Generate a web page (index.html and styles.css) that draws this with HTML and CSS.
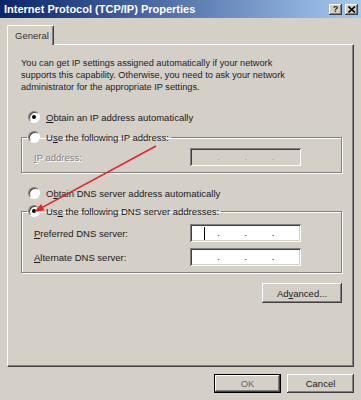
FILE: index.html
```html
<!DOCTYPE html>
<html lang="en">
<head>
    <meta charset="UTF-8">
    <title>Internet Protocol (TCP/IP) Properties</title>
    <link rel="stylesheet" href="styles.css">
</head>
<body>

<div class="window">
    <div class="titlebar">
        <span class="title">Internet Protocol (TCP/IP) Properties</span>
        <div class="caption-btns">
            <span class="cap-btn help">?</span>
            <span class="cap-btn">
                <svg width="8" height="7" viewBox="0 0 8 7"><path d="M0.5 0.5 L7 6.5 M7 0.5 L0.5 6.5" stroke="#000" stroke-width="1.6"/></svg>
            </span>
        </div>
    </div>

    <div class="tabs">
        <div class="tab">General</div>
    </div>

    <div class="panel">
        <p class="intro">You can get IP settings assigned automatically if your network<br>supports this capability. Otherwise, you need to ask your network<br>administrator for the appropriate IP settings.</p>

        <div class="option first"><span class="radio checked"></span><span><u>O</u>btain an IP address automatically</span></div>

        <fieldset class="group ip-group">
            <legend><span class="option"><span class="radio"></span><span>U<u>s</u>e the following IP address:</span></span></legend>
            <div class="field-row disabled">
                <label><u>I</u>P address:</label>
                <div class="ipbox off">
                    <span class="octet"></span><span class="dot">.</span>
                    <span class="octet"></span><span class="dot">.</span>
                    <span class="octet"></span><span class="dot">.</span>
                    <span class="octet"></span>
                </div>
            </div>
        </fieldset>

        <div class="option dns-auto"><span class="radio"></span><span>O<u>b</u>tain DNS server address automatically</span></div>

        <fieldset class="group dns-group">
            <legend><span class="option"><span class="radio checked"></span><span>Us<u>e</u> the following DNS server addresses:</span></span></legend>
            <div class="field-row">
                <label><u>P</u>referred DNS server:</label>
                <div class="ipbox">
                    <span class="octet"><span class="caret"></span></span><span class="dot">.</span>
                    <span class="octet"></span><span class="dot">.</span>
                    <span class="octet"></span><span class="dot">.</span>
                    <span class="octet"></span>
                </div>
            </div>
            <div class="field-row">
                <label><u>A</u>lternate DNS server:</label>
                <div class="ipbox">
                    <span class="octet"></span><span class="dot">.</span>
                    <span class="octet"></span><span class="dot">.</span>
                    <span class="octet"></span><span class="dot">.</span>
                    <span class="octet"></span>
                </div>
            </div>
        </fieldset>

        <div class="panel-actions">
            <button class="btn advanced">Ad<u>v</u>anced...</button>
        </div>
    </div>

    <div class="footer">
        <button class="btn default">OK</button>
        <button class="btn">Cancel</button>
    </div>

    <!-- red annotation arrow drawn over the dialog -->
    <svg class="arrow" width="361" height="400" viewBox="0 0 361 400">
        <line x1="156" y1="146" x2="42.8" y2="207.2" stroke="#e8231f" stroke-width="1.5"/>
        <polygon points="34,212 44.5,210.3 41.1,204.1" fill="#e8231f"/>
    </svg>
</div>

</body>
</html>
```

FILE: styles.css
```css
body {
    margin: 0;
    background: #d4d0c8;
    font-family: "Liberation Sans", Arial, sans-serif;
    font-size: 9.5px;
    color: #1a1a1a;
}
.window {
    position: relative;
    width: 361px;
    height: 400px;
    overflow: hidden;
}
.titlebar {
    height: 18px;
    display: flex;
    align-items: center;
    justify-content: space-between;
    padding: 0 3px 0 4px;
    background: linear-gradient(to right, #0a246a, #a6caf0);
}
.title {
    color: #fff;
    font-weight: bold;
    font-size: 11px;
}
.caption-btns {
    display: flex;
    gap: 3px;
}
.cap-btn {
    width: 13px;
    height: 11px;
    display: flex;
    align-items: center;
    justify-content: center;
    background: #d4d0c8;
    box-shadow: inset -1px -1px #404040, inset 1px 1px #fff, inset -2px -2px #808080;
    font-weight: bold;
    font-size: 9px;
}
.tabs {
    padding: 7px 0 0 7px;
    height: 19px;
}
.tab {
    position: relative;
    z-index: 1;
    width: 47px;
    height: 20px;
    box-sizing: border-box;
    padding: 4px 0 0 7px;
    background: #d4d0c8;
    border-top: 1px solid #fff;
    border-left: 1px solid #fff;
    border-right: 1px solid #404040;
    border-radius: 2px 2px 0 0;
    box-shadow: inset -1px 0 #808080;
    color: #333;
}
.panel {
    margin: 0 7px;
    height: 323px;
    box-sizing: border-box;
    border-top: 1px solid #fff;
    border-left: 1px solid #fff;
    border-right: 1px solid #404040;
    border-bottom: 1px solid #404040;
    box-shadow: inset -1px -1px #808080;
    padding: 12px 11px 0 13px;
}
.intro {
    margin: 0;
    font-size: 9.2px;
    line-height: 12px;
    color: #222;
}
.option {
    display: flex;
    align-items: center;
    height: 14px;
    gap: 6px;
    padding-left: 7px;
    white-space: nowrap;
}
.option.first {
    margin-top: 17px;
}
.option.dns-auto {
    margin-top: 13px;
}
.radio {
    width: 12px;
    height: 12px;
    box-sizing: border-box;
    border-radius: 50%;
    border: 1px solid;
    border-color: #808080 #fff #fff #808080;
    background: #fff;
    box-shadow: inset 1px 1px #404040;
    display: flex;
    align-items: center;
    justify-content: center;
}
.radio.checked::after {
    content: "";
    width: 4px;
    height: 4px;
    border-radius: 50%;
    background: #000;
}
.group {
    margin: 6px 0 0;
    padding: 4px 12px 6px;
    border: 1px solid #808080;
    box-shadow: 1px 1px 0 #fff, inset 1px 1px 0 #fff;
    min-width: 0;
}
.dns-group {
    margin-top: 4px;
    display: flex;
    flex-direction: column;
    gap: 6px;
    padding-top: 6px;
}
.group legend {
    padding: 0 2px 0 1px;
    margin-left: -7px;
    height: 14px;
}
.group legend .option {
    padding-left: 0;
}
.field-row {
    display: flex;
    align-items: center;
}
.field-row label {
    width: 156px;
}
.field-row.disabled label {
    color: #808080;
    text-shadow: 1px 1px 0 #fff;
}
.ipbox {
    width: 111px;
    height: 18px;
    box-sizing: border-box;
    padding: 2px;
    display: flex;
    align-items: center;
    background: #fff;
    box-shadow: inset 1px 1px #808080, inset -1px -1px #fff, inset 2px 2px #404040, inset -2px -2px #d4d0c8;
}
.ipbox.off {
    background: #d4d0c8;
    color: #9a9a9a;
}
.octet {
    flex: 1;
    display: flex;
    justify-content: center;
}
.dot {
    width: 2px;
    line-height: 10px;
}
.caret {
    width: 1px;
    height: 13px;
    background: #000;
}
.panel-actions {
    display: flex;
    justify-content: flex-end;
    margin-top: 10px;
}
.btn {
    font-family: inherit;
    font-size: 9.5px;
    color: #222;
    background: #d4d0c8;
    border: none;
    padding: 0;
    box-shadow: inset -1px -1px #404040, inset 1px 1px #fff, inset -2px -2px #808080;
    width: 67px;
    height: 19px;
}
.btn.advanced {
    width: 80px;
    height: 20px;
}
.btn.default {
    border: 1px solid #000;
    color: #666;
}
.footer {
    display: flex;
    justify-content: flex-end;
    gap: 6px;
    padding: 7px 7px 0 0;
}
.arrow {
    position: absolute;
    top: 0;
    left: 0;
    pointer-events: none;
}
```
